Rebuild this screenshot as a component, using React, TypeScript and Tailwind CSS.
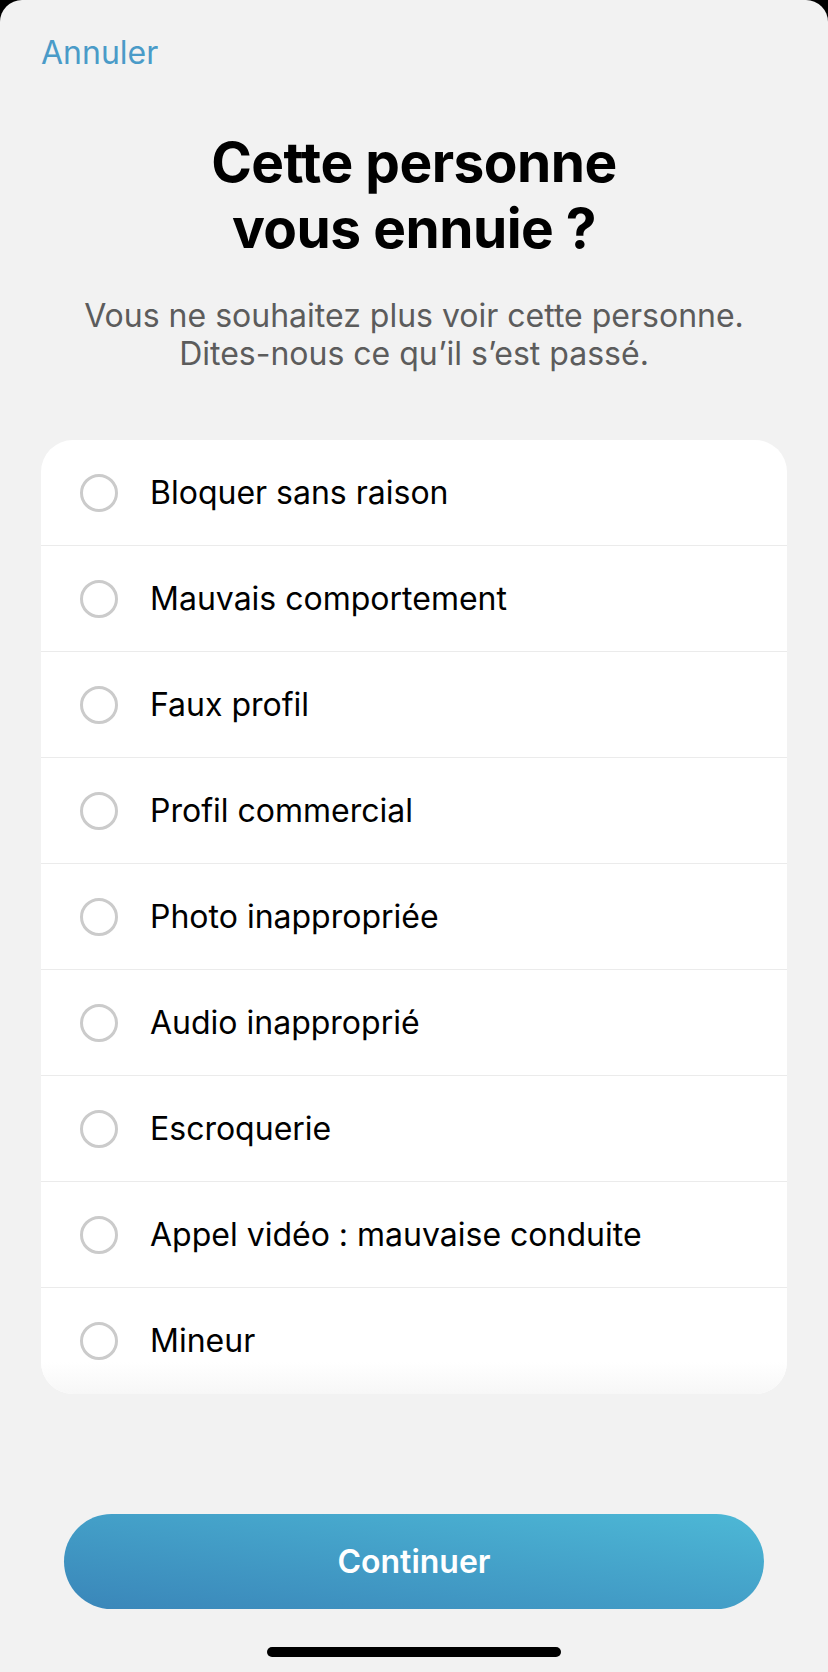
const reasons = [
  'Bloquer sans raison',
  'Mauvais comportement',
  'Faux profil',
  'Profil commercial',
  'Photo inappropriée',
  'Audio inapproprié',
  'Escroquerie',
  'Appel vidéo : mauvaise conduite',
  'Mineur',
];

export default function App() {
  return (
    <div className="w-[828px] h-[1672px] bg-black font-['Inter',sans-serif]">
      <div className="h-full rounded-t-[22px] bg-[#f2f2f2] flex flex-col">
        {/* header */}
        <div className="pt-[33px] pl-[41px]">
          <button className="text-[32px] leading-[40px] text-[#4a9bc8]">Annuler</button>
        </div>

        <h1 className="mt-[56px] text-center text-[55px] leading-[66px] font-bold text-black tracking-[-0.5px]">
          Cette personne
          <br />
          vous ennuie ?
        </h1>

        <p className="mt-[36px] text-center text-[32px] leading-[38px] text-[#5c5c5c]">
          Vous ne souhaitez plus voir cette personne.
          <br />
          Dites-nous ce qu’il s’est passé.
        </p>

        {/* options */}
        <div className="mt-[67px] mx-[41px] rounded-[32px] bg-white overflow-hidden">
          {reasons.map((r, i) => (
            <div
              key={r}
              className={
                i < reasons.length - 1
                  ? 'h-[106px] flex items-center border-b border-[#ebebeb]'
                  : 'h-[106px] flex items-center bg-gradient-to-b from-white from-70% to-[#f7f7f7]'
              }
            >
              <span className="ml-[39px] w-[38px] h-[38px] rounded-full border-[3px] border-[#cbcbcb] shrink-0" />
              <span className="ml-[32px] text-[32px] text-black">{r}</span>
            </div>
          ))}
        </div>

        <div className="flex-1" />

        <button className="mx-[64px] h-[95px] rounded-full bg-gradient-to-tr from-[#3a86b9] to-[#4db8d6] text-white text-[32px] font-semibold">
          Continuer
        </button>

        <div className="mt-[38px] mb-[15px] mx-auto w-[294px] h-[10px] rounded-full bg-black" />
      </div>
    </div>
  );
}
